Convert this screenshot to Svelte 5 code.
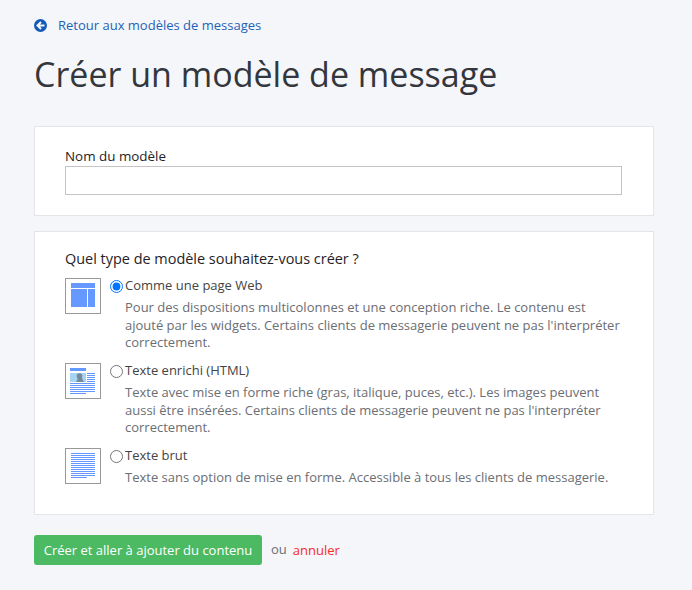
<script>
  const options = [
    { id: 'web', label: 'Comme une page Web', text: "Pour des dispositions multicolonnes et une conception riche. Le contenu est ajouté par les widgets. Certains clients de messagerie peuvent ne pas l'interpréter correctement.", checked: true },
    { id: 'html', label: 'Texte enrichi (HTML)', text: "Texte avec mise en forme riche (gras, italique, puces, etc.). Les images peuvent aussi être insérées. Certains clients de messagerie peuvent ne pas l'interpréter correctement.", checked: false },
    { id: 'plain', label: 'Texte brut', text: "Texte sans option de mise en forme. Accessible à tous les clients de messagerie.", checked: false }
  ];
  const sideRows = [9, 11, 13, 15, 17];
  const htmlRows = [19, 21, 23, 25, 27, 29];
  const plainRows = [4, 6, 8, 10, 12, 14, 16, 18, 20, 22, 24, 26, 28];
</script>

<div class="page">
  <a class="back" href="#top">
    <svg class="back-icon" width="13" height="13" viewBox="0 0 13 13" aria-hidden="true">
      <circle cx="6.5" cy="6.5" r="6.5" fill="#1259b8" />
      <path d="M7 3 3.5 6.5 7 10M3.800 6.500H10.500" fill="none" stroke="#f5f6f9" stroke-width="2" />
    </svg>
    <span>Retour aux modèles de messages</span>
  </a>
  <h1>Créer un modèle de message</h1>

  <section class="card name-card">
    <label class="title" for="name">Nom du modèle</label>
    <input id="name" type="text" />
  </section>

  <section class="card type-card">
    <div class="title big">Quel type de modèle souhaitez-vous créer ?</div>
    {#each options as o}
      <div class="option">
        <div class="thumb">
          {#if o.id === 'web'}
            <svg width="34" height="34" viewBox="0 0 34 34">
              <rect x="5" y="4" width="24" height="5" fill="#6699ff" />
              <rect x="5" y="10" width="16" height="18" fill="#6699ff" />
              <rect x="22" y="10" width="7" height="18" fill="#6699ff" />
            </svg>
          {:else if o.id === 'html'}
            <svg width="34" height="34" viewBox="0 0 34 34">
              <rect x="4" y="4" width="16" height="3" fill="#6699ff" />
              <rect x="4" y="9" width="16" height="9" fill="#a6d4f2" />
              <circle cx="13.500" cy="12" r="2.800" fill="#76899b" />
              <path d="M11.500 13.500h4.500l.5 2 1.500 2.500h-8l1.500-2.500z" fill="#76899b" />
              {#each sideRows as y}
                <rect x="21" y={y} width="8" height="1" fill="#6699ff" />
              {/each}
              {#each htmlRows as y, i}
                <rect x="4" y={y} width={i === 5 ? 16 : 25} height="1" fill="#6699ff" />
              {/each}
            </svg>
          {:else}
            <svg width="34" height="34" viewBox="0 0 34 34">
              {#each plainRows as y, i}
                <rect x="5" y={y} width={i === 12 ? 16 : 24} height="1" fill="#6699ff" />
              {/each}
            </svg>
          {/if}
        </div>
        <input class="radio" type="radio" name="type" checked={o.checked} />
        <div class="body">
          <div class="label">{o.label}</div>
          <p>{o.text}</p>
        </div>
      </div>
    {/each}
  </section>

  <div class="actions">
    <button type="button">Créer et aller à ajouter du contenu</button>
    <span class="ou">ou</span>
    <a class="cancel" href="#top">annuler</a>
  </div>
</div>

<style>
  :global(body) {
    margin: 0;
    background: #f5f6f9;
  }
  .page {
    font-family: "Open Sans", sans-serif;
    font-size: 13px;
    color: #333;
    padding: 16px 38px 25px 34px;
    min-height: 549px;
  }
  .back {
    display: flex;
    align-items: center;
    gap: 11px;
    color: #1e62b8;
    text-decoration: none;
    height: 18px;
    font-size: 13px;
  }
  h1 {
    font-size: 34px;
    font-weight: 400;
    line-height: 46px;
    color: #33373d;
    margin: 17px 0 0;
  }
  .card {
    background: #fff;
    border: 1px solid #e4e5e8;
    box-sizing: border-box;
    padding: 20px 31px 0 30px;
  }
  .name-card {
    height: 90px;
    margin-top: 29px;
  }
  .type-card {
    height: 284px;
    margin-top: 15px;
    padding-top: 18px;
  }
  .title {
    display: block;
    font-weight: 500;
    font-size: 13.400px;
    line-height: 18px;
    color: #1f2226;
  }
  .big {
    font-size: 14.450px;
  }
  input[type="text"] {
    display: block;
    box-sizing: border-box;
    width: 100%;
    height: 29px;
    border: 1px solid #c4c4c4;
    background: #fff;
    margin-top: 1px;
    padding: 0 6px;
  }
  .option {
    display: flex;
    margin-top: 10px;
  }
  .option + .option {
    margin-top: 11.500px;
  }
  .thumb {
    width: 36px;
    height: 36px;
    box-sizing: border-box;
    border: 1px solid #999;
    background: #fff;
    flex: none;
  }
  .thumb svg {
    display: block;
  }
  .radio {
    width: 13px;
    height: 13px;
    margin: 2px 2px 0 9px;
    accent-color: #0075ff;
    flex: none;
  }
  .label {
    font-size: 13px;
    line-height: 15px;
    color: #444;
  }
  p {
    margin: 6px 0 0;
    font-size: 13px;
    line-height: 17.500px;
    color: #6b6e73;
  }
  .actions {
    display: flex;
    align-items: center;
    margin-top: 20px;
  }
  button {
    height: 30px;
    width: 228px;
    border: 0;
    border-radius: 3px;
    background: #4cb963;
    color: #fff;
    font: 500 13px "Open Sans", sans-serif;
    padding: 0;
  }
  .ou {
    margin-left: 9px;
    margin-top: -3px;
    color: #6b6e73;
  }
  .cancel {
    margin-left: 6px;
    margin-top: -1px;
    color: #f52b2b;
    text-decoration: none;
  }
</style>
